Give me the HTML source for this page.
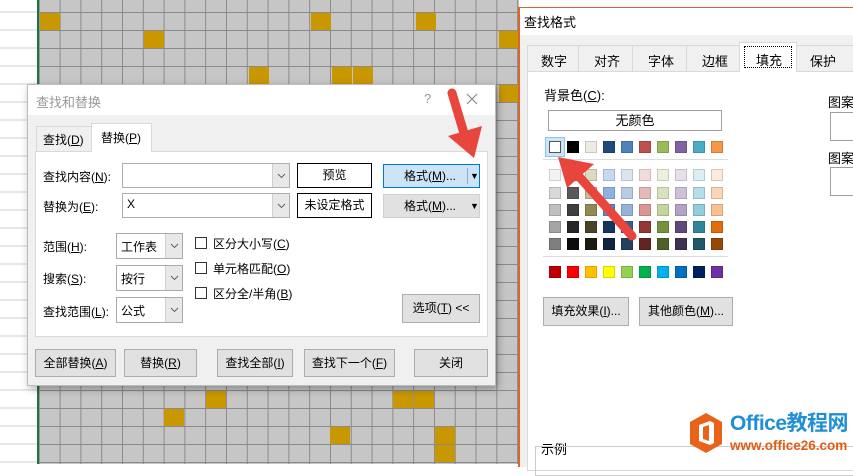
<!DOCTYPE html>
<html><head><meta charset="utf-8"><style>
*{box-sizing:border-box;margin:0;padding:0}
body{width:853px;height:464px;overflow:hidden;position:relative;background:#fff;font-family:"Liberation Sans","Noto Sans CJK SC",sans-serif;font-size:12px;color:#000}
.a{position:absolute}
.left{left:0;top:0;width:38px;height:464px;background:repeating-linear-gradient(to bottom,transparent 0,transparent 11.5px,#cfcfcf 11.5px,#cfcfcf 12.5px,transparent 12.5px,transparent 18px);background-size:100% 18px;background-position:0 0}
.grid{left:39px;top:0;width:480px;height:464px;background-color:#c6c6c6;
background-image:linear-gradient(to right,#8a8a8a 1px,transparent 1px),linear-gradient(to bottom,#8a8a8a 1px,transparent 1px);
background-size:20.8px 18px;background-position:-0.2px 12px}
.g{position:absolute;width:20px;height:17px;background:#c99700}
.btn{position:absolute;background:#e1e1e1;border:1px solid #adadad;text-align:center;line-height:26px;font-size:12px;white-space:nowrap}
.box{position:absolute;background:#fff;border:1px solid #abadb3}
.dd{position:absolute;right:0;top:0;bottom:0;width:17px;background:#e8e8e8;border-left:1px solid #d0d0d0}
.dd svg{position:absolute;left:4px;top:50%;margin-top:-3px}
.lbl{position:absolute;font-size:12px;white-space:nowrap}
.cb{position:absolute;width:12px;height:12px;border:1px solid #333;background:#fff}
.sw{position:absolute;width:12px;height:12px;border:1px solid rgba(0,0,0,.15)}
u{text-decoration:underline}
</style></head><body>
<div class="a left"></div>
<div class="a" style="left:37px;top:0;width:2px;height:464px;background:#217346"></div>
<div class="a grid">
<div class="g" style="left:1px;top:13px"></div>
<div class="g" style="left:272px;top:13px"></div>
<div class="g" style="left:377px;top:13px"></div>
<div class="g" style="left:105px;top:31px"></div>
<div class="g" style="left:210px;top:67px"></div>
<div class="g" style="left:293px;top:67px"></div>
<div class="g" style="left:314px;top:67px"></div>
<div class="g" style="left:460px;top:31px"></div>
<div class="g" style="left:460px;top:85px"></div>
<div class="g" style="left:167px;top:391px"></div>
<div class="g" style="left:354px;top:391px"></div>
<div class="g" style="left:375px;top:391px"></div>
<div class="g" style="left:125px;top:409px"></div>
<div class="g" style="left:291px;top:427px"></div>
<div class="g" style="left:396px;top:427px"></div>
<div class="g" style="left:396px;top:445px"></div>
</div>

<!-- find/replace dialog -->
<div class="a" style="left:27px;top:84px;width:469px;height:302px;background:#f0f0f0;border:1px solid #bcbcbc;box-shadow:2px 3px 8px rgba(0,0,0,.3)">
 <div class="a" style="left:0;top:0;width:467px;height:30px;background:#fff"></div>
 <div class="lbl" style="left:8px;top:7px;color:#999;font-size:13px">查找和替换</div>
 <div class="lbl" style="left:396px;top:6px;color:#999;font-size:13px">?</div>
 <svg class="a" style="left:438px;top:8px" width="12" height="12"><path d="M1 1L11 11M11 1L1 11" stroke="#888" stroke-width="1.2"/></svg>
 <div class="a" style="left:8px;top:41px;width:56px;height:25px;border:1px solid #d9d9d9;border-bottom:none;background:#f0f0f0"></div>
 <div class="lbl" style="left:15px;top:46px">查找(<u>D</u>)</div>
 <div class="a" style="left:63px;top:38px;width:61px;height:29px;border:1px solid #d9d9d9;border-bottom:none;background:#fff;z-index:2"></div>
 <div class="lbl" style="left:73px;top:44px;z-index:3">替换(<u>P</u>)</div>
 <div class="a" style="left:7px;top:66px;width:453px;height:186px;background:#fff;border:1px solid #d9d9d9"></div>
 <div class="lbl" style="left:15px;top:83px">查找内容(<u>N</u>):</div>
 <div class="box" style="left:94px;top:78px;width:168px;height:25px"><div class="dd"><svg width="9" height="6"><path d="M1 1L4.5 4.5L8 1" stroke="#666" fill="none"/></svg></div></div>
 <div class="lbl" style="left:15px;top:113px">替换为(<u>E</u>):</div>
 <div class="box" style="left:94px;top:108px;width:168px;height:25px"><span style="position:absolute;left:4px;top:3px">X</span><div class="dd"><svg width="9" height="6"><path d="M1 1L4.5 4.5L8 1" stroke="#666" fill="none"/></svg></div></div>
 <div class="a" style="left:269px;top:78px;width:75px;height:25px;border:1px solid #000;background:#fff;text-align:center;line-height:23px">预览</div>
 <div class="a" style="left:269px;top:108px;width:75px;height:25px;border:1px solid #000;background:#fff;text-align:center;line-height:23px">未设定格式</div>
 <div class="a" style="left:355px;top:79px;width:97px;height:24px;background:#cce4f7;border:1px solid #0078d7;line-height:22px"><span style="position:absolute;left:20px">格式(<u>M</u>)...</span><span style="position:absolute;left:83px;border-left:1px solid #9ab;height:16px;top:3px"></span><span style="position:absolute;left:86px;font-size:9px">▼</span></div>
 <div class="a" style="left:355px;top:109px;width:97px;height:24px;background:#e1e1e1;border:1px solid #d0d0d0;line-height:22px"><span style="position:absolute;left:20px">格式(<u>M</u>)...</span><span style="position:absolute;left:86px;font-size:9px">▼</span></div>
 <div class="lbl" style="left:15px;top:153px">范围(<u>H</u>):</div>
 <div class="box" style="left:88px;top:148px;width:67px;height:26px;border-color:#aaa"><span style="position:absolute;left:4px;top:4px">工作表</span><div class="dd"><svg width="9" height="6"><path d="M1 1L4.5 4.5L8 1" stroke="#666" fill="none"/></svg></div></div>
 <div class="lbl" style="left:15px;top:185px">搜索(<u>S</u>):</div>
 <div class="box" style="left:88px;top:180px;width:67px;height:26px;border-color:#aaa"><span style="position:absolute;left:4px;top:4px">按行</span><div class="dd"><svg width="9" height="6"><path d="M1 1L4.5 4.5L8 1" stroke="#666" fill="none"/></svg></div></div>
 <div class="lbl" style="left:15px;top:218px">查找范围(<u>L</u>):</div>
 <div class="box" style="left:88px;top:212px;width:67px;height:26px;border-color:#aaa"><span style="position:absolute;left:4px;top:4px">公式</span><div class="dd"><svg width="9" height="6"><path d="M1 1L4.5 4.5L8 1" stroke="#666" fill="none"/></svg></div></div>
 <div class="cb" style="left:167px;top:152px"></div><div class="lbl" style="left:185px;top:150px">区分大小写(<u>C</u>)</div>
 <div class="cb" style="left:167px;top:177px"></div><div class="lbl" style="left:185px;top:175px">单元格匹配(<u>O</u>)</div>
 <div class="cb" style="left:167px;top:202px"></div><div class="lbl" style="left:185px;top:200px">区分全/半角(<u>B</u>)</div>
 <div class="btn" style="left:374px;top:209px;width:78px;height:29px;line-height:27px">选项(<u>T</u>) &lt;&lt;</div>
 <div class="btn" style="left:7px;top:264px;width:81px;height:28px">全部替换(<u>A</u>)</div>
 <div class="btn" style="left:96px;top:264px;width:73px;height:28px">替换(<u>R</u>)</div>
 <div class="btn" style="left:189px;top:264px;width:76px;height:28px">查找全部(<u>I</u>)</div>
 <div class="btn" style="left:276px;top:264px;width:91px;height:28px">查找下一个(<u>F</u>)</div>
 <div class="btn" style="left:386px;top:264px;width:74px;height:28px">关闭</div>
</div>

<!-- find format dialog -->
<div class="a" style="left:518px;top:7px;width:340px;height:460px;background:#f0f0f0;border-left:2px solid #d8662e;border-top:1px solid #d8662e">
 <div class="a" style="left:0;top:0;width:340px;height:27px;background:#fff"></div>
 <div class="lbl" style="left:4px;top:4px;font-size:13px">查找格式</div>
 <div class="a" style="left:7px;top:37px;width:340px;height:26px;border:1px solid #d9d9d9;border-bottom:none;background:#f0f0f0"></div>
 <div class="lbl" style="left:21px;top:43px;font-size:13px">数字</div>
 <div class="a" style="left:58px;top:37px;height:26px;border-left:1px solid #d9d9d9"></div>
 <div class="lbl" style="left:74px;top:43px;font-size:13px">对齐</div>
 <div class="a" style="left:112px;top:37px;height:26px;border-left:1px solid #d9d9d9"></div>
 <div class="lbl" style="left:128px;top:43px;font-size:13px">字体</div>
 <div class="a" style="left:166px;top:37px;height:26px;border-left:1px solid #d9d9d9"></div>
 <div class="lbl" style="left:182px;top:43px;font-size:13px">边框</div>
 <div class="a" style="left:219px;top:34px;width:58px;height:30px;background:#fff;border:1px solid #d9d9d9;border-bottom:none;z-index:2"></div>
 <div class="a" style="left:224px;top:38px;width:48px;height:22px;border:1px dotted #000;z-index:3"></div>
 <div class="lbl" style="left:236px;top:42px;font-size:13px;z-index:3">填充</div>
 <div class="lbl" style="left:290px;top:43px;font-size:13px">保护</div>
 <div class="a" style="left:7px;top:63px;width:340px;height:400px;background:#fff;border:1px solid #d9d9d9"></div>
 <div class="lbl" style="left:24px;top:77px;font-size:13px">背景色(<u>C</u>):</div>
 <div class="a" style="left:28px;top:102px;width:174px;height:21px;border:1px solid #a0a0a0;background:#fff;text-align:center;line-height:19px;font-size:13px">无颜色</div>
 <div class="a" style="left:23px;top:151px;width:185px;border-top:1px solid #ddd"></div>
 <div class="a" style="left:23px;top:248px;width:185px;border-top:1px solid #ddd"></div>
 <div class="lbl" style="left:308px;top:84px;font-size:13px">图案</div>
 <div class="a" style="left:310px;top:104px;width:40px;height:29px;border:1px solid #a0a0a0"></div>
 <div class="lbl" style="left:308px;top:140px;font-size:13px">图案</div>
 <div class="a" style="left:310px;top:159px;width:40px;height:29px;border:1px solid #a0a0a0"></div>
 <div class="btn" style="left:23px;top:289px;width:86px;height:29px;line-height:27px">填充效果(<u>I</u>)...</div>
 <div class="btn" style="left:119px;top:289px;width:94px;height:29px;line-height:27px">其他颜色(<u>M</u>)...</div>
 <div class="lbl" style="left:21px;top:431px;font-size:13px">示例</div>
 <div class="a" style="left:15px;top:438px;width:340px;height:30px;border:1px solid #ccc;border-right:none"></div>
 <div id="pal"></div>
</div>

<!-- logo -->
<svg class="a" style="left:688px;top:412px" width="36" height="42" viewBox="0 0 36 42">
<polygon points="18,1 34,10 34,32 18,41 2,32 2,10" fill="#e8621a"/>
<path d="M11 13 L22 9 L26 11 L26 31 L22 33 L11 29 Z M15 15 L15 27 L21 29 L21 13 Z" fill="#fff" fill-rule="evenodd"/>
</svg>
<div class="a" style="left:730px;top:412px;color:#1f8fd6;font-size:21px;line-height:24px;font-weight:bold;letter-spacing:-0.5px;white-space:nowrap">Office教程网</div>
<div class="a" style="left:730px;top:438px;color:#e35b12;font-size:13.5px;line-height:16px;font-weight:bold;white-space:nowrap">www.office26.com</div>

<!-- arrows -->
<svg class="a" style="left:0;top:0" width="853" height="464">
<g fill="#e8453c">
<line x1="452" y1="93" x2="466" y2="140" stroke="#e8453c" stroke-width="9" stroke-linecap="round"/>
<polygon points="448,136 482,126 474,158"/>
<line x1="632" y1="236" x2="575" y2="172" stroke="#e8453c" stroke-width="9" stroke-linecap="round"/>
<polygon points="558,157 594,164 567,188"/>
</g>
</svg>
<script>
var rows=[
["#ffffff","#000000","#eeece1","#1f497d","#4f81bd","#c0504d","#9bbb59","#8064a2","#4bacc6","#f79646"],
["#f2f2f2","#7f7f7f","#ddd9c3","#c6d9f0","#dbe5f1","#f2dcdb","#ebf1dd","#e5e0ec","#dbeef3","#fdeada"],
["#d8d8d8","#595959","#c4bd97","#8db3e2","#b8cce4","#e5b9b7","#d7e3bc","#ccc1d9","#b7dde8","#fbd5b5"],
["#bfbfbf","#3f3f3f","#938953","#548dd4","#95b3d7","#d99694","#c3d69b","#b2a2c7","#92cddc","#fac08f"],
["#a5a5a5","#262626","#494429","#17365d","#366092","#953734","#76923c","#5f497a","#31859b","#e36c09"],
["#7f7f7f","#0c0c0c","#1d1b10","#0f243e","#244061","#632423","#4f6128","#3f3151","#205867","#974806"],
["#c00000","#ff0000","#ffc000","#ffff00","#92d050","#00b050","#00b0f0","#0070c0","#002060","#7030a0"]];
var ys=[133,161,179,196,213,230,258],h='';
rows.forEach(function(r,i){r.forEach(function(c,j){h+='<div class="sw" style="left:'+(29+j*18)+'px;top:'+ys[i]+'px;background:'+c+'"></div>';});});
h+='<div class="a" style="left:25px;top:129px;width:20px;height:20px;border:1px solid #8cc4ec;background:#cde6f7"></div><div class="a" style="left:29px;top:133px;width:12px;height:12px;border:1px solid #555;background:#fff"></div>';
document.getElementById('pal').innerHTML=h;
</script>
</body></html>
